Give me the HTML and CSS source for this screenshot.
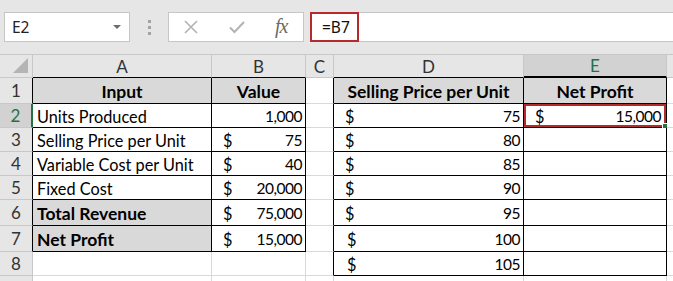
FILE: index.html
```html
<!DOCTYPE html>
<html lang="en">
<head>
  <meta charset="UTF-8">
  <title>Net Profit Sheet</title>
  <link rel="stylesheet" href="styles.css">
</head>
<body>

<!-- Formula bar -->
<div class="toolbar">
  <div class="name-box">
    <span>E2</span>
    <svg class="caret" width="8" height="5" viewBox="0 0 8 5"><path d="M0 0h8L4 4z" fill="#6d6d6d"/></svg>
  </div>
  <div class="grip"><i></i><i></i><i></i></div>
  <div class="fx-box">
    <svg width="16" height="16" viewBox="0 0 16 16"><path d="M2 2L14 14M14 2L2 14" stroke="#b3b3b3" stroke-width="1.6" fill="none"/></svg>
    <svg width="18" height="16" viewBox="0 0 18 16"><path d="M2 8.5L6.5 13L16 3" stroke="#b3b3b3" stroke-width="2" fill="none"/></svg>
    <span class="fx">fx</span>
  </div>
  <div class="formula">
    <span class="formula-text">=B7</span>
  </div>
</div>

<!-- Sheet -->
<div class="sheet">
  <div class="hdr corner"><svg width="17" height="16" viewBox="0 0 17 16"><path d="M16 0V15H1z" fill="#b4b4b4"/></svg></div>
  <div class="hdr col bb">A</div>
  <div class="hdr col bb">B</div>
  <div class="hdr col">C</div>
  <div class="hdr col bb">D</div>
  <div class="hdr col bb sel-col">E</div>
  <div class="hdr col"></div>

  <div class="hdr row br">1</div>
  <div class="cell k head">Input</div>
  <div class="cell k head">Value</div>
  <div class="cell br"></div>
  <div class="cell k head">Selling Price per Unit</div>
  <div class="cell k head">Net Profit</div>
  <div class="cell"></div>

  <div class="hdr row sel-row">2</div>
  <div class="cell k">Units Produced</div>
  <div class="cell k num"><span>1,000</span></div>
  <div class="cell br"></div>
  <div class="cell k acct"><span>$</span><span>75</span></div>
  <div class="cell k acct active"><span>$</span><span>15,000</span><i class="handle"></i></div>
  <div class="cell"></div>

  <div class="hdr row br">3</div>
  <div class="cell k">Selling Price per Unit</div>
  <div class="cell k acct"><span>$</span><span>75</span></div>
  <div class="cell br"></div>
  <div class="cell k acct"><span>$</span><span>80</span></div>
  <div class="cell k"></div>
  <div class="cell"></div>

  <div class="hdr row br">4</div>
  <div class="cell k">Variable Cost per Unit</div>
  <div class="cell k acct"><span>$</span><span>40</span></div>
  <div class="cell br"></div>
  <div class="cell k acct"><span>$</span><span>85</span></div>
  <div class="cell k"></div>
  <div class="cell"></div>

  <div class="hdr row br">5</div>
  <div class="cell k">Fixed Cost</div>
  <div class="cell k acct"><span>$</span><span>20,000</span></div>
  <div class="cell br"></div>
  <div class="cell k acct"><span>$</span><span>90</span></div>
  <div class="cell k"></div>
  <div class="cell"></div>

  <div class="hdr row br">6</div>
  <div class="cell k label">Total Revenue</div>
  <div class="cell k acct"><span>$</span><span>75,000</span></div>
  <div class="cell br"></div>
  <div class="cell k acct"><span>$</span><span>95</span></div>
  <div class="cell k"></div>
  <div class="cell"></div>

  <div class="hdr row br">7</div>
  <div class="cell k label">Net Profit</div>
  <div class="cell k acct"><span>$</span><span>15,000</span></div>
  <div class="cell br"></div>
  <div class="cell k acct wide"><span>$</span><span>100</span></div>
  <div class="cell k"></div>
  <div class="cell"></div>

  <div class="hdr row">8</div>
  <div class="cell"></div>
  <div class="cell"></div>
  <div class="cell br"></div>
  <div class="cell k acct wide"><span>$</span><span>105</span></div>
  <div class="cell k"></div>
  <div class="cell"></div>

  <div class="hdr row"></div>
  <div class="cell"></div>
  <div class="cell"></div>
  <div class="cell"></div>
  <div class="cell"></div>
  <div class="cell"></div>
  <div class="cell"></div>
</div>

</body>
</html>
```

FILE: styles.css
```css
body {
  margin: 0;
  width: 673px;
  height: 281px;
  overflow: hidden;
  background-color: #e6e6e6;
  font-family: 'Lato', sans-serif;
}

/* formula bar */
.toolbar {
  height: 54px;
  display: flex;
  align-items: flex-start;
  padding-top: 12px;
  padding-left: 4px;
  box-sizing: border-box;
}

.name-box {
  width: 126px;
  height: 30px;
  box-sizing: border-box;
  background-color: #fff;
  border: 1px solid #c6c6c6;
  display: flex;
  align-items: center;
  justify-content: space-between;
  padding: 0 8px 0 7px;
  font-family: 'Noto Sans', sans-serif;
  font-size: 15.5px;
  color: #222;
}

.caret {
  margin-top: 1px;
}

.grip {
  width: 38px;
  display: flex;
  flex-direction: column;
  align-items: center;
  gap: 3px;
  padding-top: 8px;
}

.grip i {
  width: 3px;
  height: 3px;
  background-color: #a3a3a3;
}

.fx-box {
  width: 136px;
  height: 30px;
  box-sizing: border-box;
  background-color: #fff;
  border: 1px solid #c6c6c6;
  display: flex;
  align-items: center;
  padding-left: 14px;
  gap: 29px;
}

.fx {
  font-family: 'Liberation Serif', serif;
  font-style: italic;
  font-size: 20px;
  color: #6a6a6a;
  letter-spacing: -1px;
  margin-top: -2px;
}

.formula {
  margin-left: 6px;
  flex: 1;
  height: 30px;
  box-sizing: border-box;
  background-color: #fff;
  border-top: 1px solid #c6c6c6;
  border-bottom: 1px solid #c6c6c6;
  display: flex;
}

.formula-text {
  width: 49px;
  height: 30px;
  margin-top: -1px;
  box-sizing: border-box;
  border: 2px solid #b52a2a;
  display: flex;
  align-items: center;
  padding-left: 10px;
  font-family: 'Noto Sans', sans-serif;
  font-size: 15.5px;
  color: #111;
}

/* worksheet */
.sheet {
  display: grid;
  grid-template-columns: 33px 179px 94px 28px 190px 143px 1fr;
  grid-template-rows: 24px 26px 24px 24px 24px 24px 26px 26px 24px 10px;
  font-size: 16.3px;
  color: #000;
}

.sheet > div {
  box-sizing: border-box;
  border-right: 1px solid #d9d9d9;
  border-bottom: 1px solid #d9d9d9;
  display: flex;
  align-items: center;
  padding: 1px 4px 0;
  white-space: nowrap;
  position: relative;
}

.hdr {
  background-color: #e6e6e6;
  color: #333;
  justify-content: center;
  font-size: 17px;
}

.sheet > .hdr {
  border-color: #c8c8c8;
  border-top: 1px solid #c8c8c8;
  padding: 0;
}

.sheet > .hdr.row {
  border-top: none;
}

.sheet > .corner {
  align-items: flex-end;
  justify-content: flex-end;
  padding: 0 3px 3px 0;
}

.sel-col {
  background-color: #d2d2d2;
  color: #217346;
}

.sheet > .sel-col {
  border-bottom: 2px solid #217346;
}

.sel-row {
  background-color: #d2d2d2;
  color: #217346;
}

.sheet > .sel-row {
  border-right: 2px solid #217346;
}

.cell {
  background-color: #fff;
}

.sheet > .k {
  border-right-color: #000;
  border-bottom-color: #000;
}

.sheet > .bb {
  border-bottom-color: #000;
}

.sheet > .br {
  border-right-color: #000;
}

.head {
  background-color: #d9d9d9;
  font-weight: bold;
  justify-content: center;
  font-size: 17.5px;
}

.label {
  background-color: #d9d9d9;
  font-weight: bold;
  font-size: 17.5px;
}

.num {
  justify-content: flex-end;
}

.num span,
.acct span:last-of-type {
  font-size: 15.5px;
  letter-spacing: -0.5px;
}

.sheet > .num {
  padding-right: 3px;
}

.sheet > .acct {
  justify-content: space-between;
  padding: 1px 3px 0 11px;
}

.sheet > .wide {
  padding-left: 13px;
}

.sheet > .active {
  padding-right: 5px;
  box-shadow: inset 0 0 0 2px #b52a2a;
}

.handle {
  position: absolute;
  right: -3px;
  bottom: -3px;
  width: 5px;
  height: 5px;
  background-color: #217346;
  border: 1px solid #fff;
}
```
